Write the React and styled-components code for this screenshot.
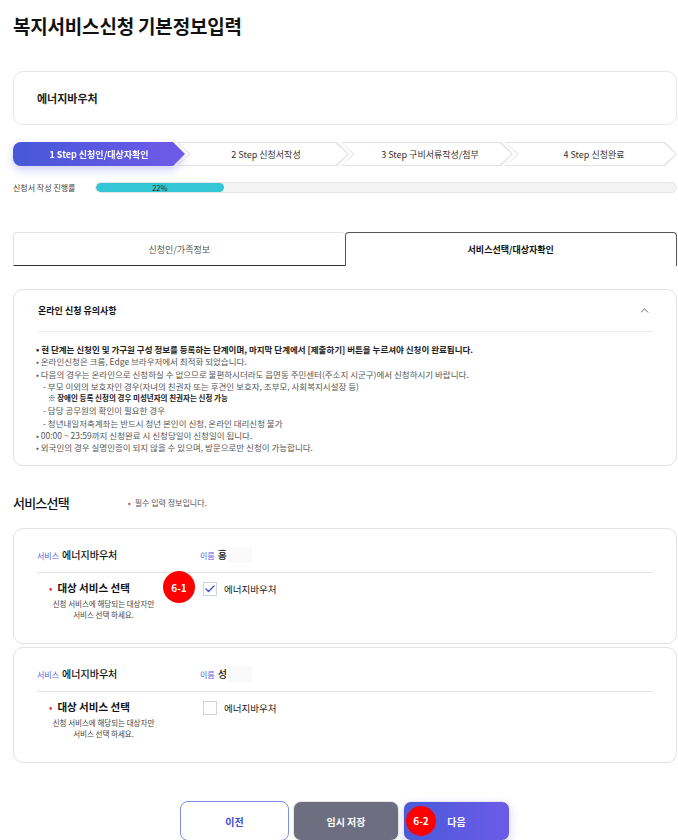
import React from 'react'
import styled, { createGlobalStyle } from 'styled-components'
import { ChevronUp, Check } from 'lucide-react'

const GlobalStyle = createGlobalStyle`
  body {
    margin: 0;
    background: #fff;
    font-family: "Noto Sans CJK KR", "Noto Sans", sans-serif;
    color: #222;
  }
  * { box-sizing: border-box; }
`;

const Page = styled.div`
  width: 678px;
  padding: 14px 1px 0 13px;
`;

const Title = styled.h1`
  margin: 0;
  font-size: 19px;
  line-height: 24px;
  font-weight: 700;
  color: #111;
  letter-spacing: -0.2px;
`;

const NameCard = styled.div`
  margin-top: 33px;
  height: 54px;
  border: 1px solid #e6e6e6;
  border-radius: 10px;
  display: flex;
  align-items: center;
  padding-left: 23px;
  font-size: 11px;
  font-weight: 700;
  color: #1a1a1a;
`;

const Steps = styled.div`
  margin-top: 17px;
  display: flex;
`;

const arrowFirst = 'polygon(0 0, calc(100% - 12px) 0, 100% 50%, calc(100% - 12px) 100%, 0 100%)';
const arrowMid = 'polygon(0 0, calc(100% - 12px) 0, 100% 50%, calc(100% - 12px) 100%, 0 100%, 12px 50%)';

const StepWrap = styled.div`
  flex: 1;
  position: relative;
  z-index: ${p => (p.$active ? 2 : 1)};
  margin-left: ${p => (p.$first ? 0 : -8)}px;
  filter: ${p => (p.$active ? 'drop-shadow(0 4px 5px rgba(95, 85, 225, 0.28))' : 'none')};
`;

const StepShape = styled.div`
  position: relative;
  height: 24px;
  display: flex;
  align-items: center;
  justify-content: center;
  font-size: 9px;
  font-weight: ${p => (p.$active ? 700 : 400)};
  color: ${p => (p.$active ? '#fff' : '#333')};
  background: ${p => (p.$active ? 'linear-gradient(90deg, #4658d8, #6f5ae8)' : '#e3e3e3')};
  border-radius: ${p => (p.$first ? '8px 0 0 8px' : '0')};
  clip-path: ${p => (p.$first ? arrowFirst : arrowMid)};
  padding-left: ${p => (p.$first ? 0 : 6)}px;

  &::before {
    content: '';
    display: ${p => (p.$active ? 'none' : 'block')};
    position: absolute;
    inset: 1px 1.5px;
    background: #fff;
    clip-path: ${p => (p.$first ? arrowFirst : arrowMid)};
  }
`;

const StepText = styled.span`
  position: relative;
`;

const ProgressRow = styled.div`
  margin-top: 16px;
  display: flex;
  align-items: center;
  height: 11px;
`;

const ProgressLabel = styled.span`
  width: 82px;
  font-size: 8px;
  color: #444;
  white-space: nowrap;
`;

const ProgressTrack = styled.div`
  flex: 1;
  height: 11px;
  border-radius: 6px;
  background: #f3f3f3;
  border: 1px solid #e6e6e6;
  overflow: hidden;
`;

const ProgressFill = styled.div`
  height: 100%;
  border-radius: 6px;
  background: #35c6d6;
  display: flex;
  align-items: center;
  justify-content: center;
  font-size: 7.5px;
  color: #222;
`;

const Tabs = styled.div`
  margin-top: 39px;
  display: flex;
  height: 34px;
`;

const Tab = styled.div`
  flex: 1;
  display: flex;
  align-items: center;
  justify-content: center;
  font-size: 9px;
  font-weight: ${p => (p.$active ? 700 : 400)};
  color: ${p => (p.$active ? '#111' : '#555')};
  border: 1px solid ${p => (p.$active ? '#555' : '#e2e2e2')};
  border-bottom: ${p => (p.$active ? 'none' : '1px solid #333')};
  border-right: ${p => (p.$active ? '1px solid #555' : 'none')};
  border-radius: 4px 4px 0 0;
`;

const NoticeBox = styled.section`
  margin-top: 23px;
  border: 1px solid #e2e2e2;
  border-radius: 10px;
  padding: 0 23px 12px 24px;
`;

const NoticeHead = styled.div`
  height: 42px;
  display: flex;
  align-items: center;
  justify-content: space-between;
  border-bottom: 1px solid #ececec;
  font-size: 9px;
  font-weight: 700;
  color: #111;
`;

const NoticeList = styled.ul`
  list-style: none;
  margin: 11px 0 0 -2px;
  padding: 0;
`;

const NoticeItem = styled.li`
  font-size: ${p => (p.$note ? 7.5 : 8.5)}px;
  line-height: 12.25px;
  white-space: nowrap;
  font-weight: ${p => (p.$strong ? 700 : 400)};
  color: ${p => (p.$strong ? '#222' : '#555')};
  padding-left: ${p => p.$indent || 0}px;
`;

const SectionHead = styled.div`
  margin-top: 26px;
  display: flex;
  align-items: center;
  height: 20px;
`;

const SectionTitle = styled.h2`
  margin: 0;
  width: 115px;
  font-size: 13px;
  font-weight: 500;
  letter-spacing: -0.8px;
  color: #111;
`;

const Required = styled.span`
  font-size: 8px;
  color: #555;
  &::before {
    content: '•';
    color: #e53935;
    margin-right: 4px;
  }
`;

const ServiceCard = styled.div`
  margin-top: ${p => p.$gap}px;
  border: 1px solid #e2e2e2;
  border-radius: 10px;
  padding: 0 23px 23px 23px;
`;

const CardHeader = styled.div`
  display: flex;
  align-items: baseline;
  padding: 18px 0 8px;
  line-height: 16px;
  border-bottom: 1px solid #e3e3e3;
`;

const HeadCell = styled.div`
  width: ${p => p.$w || 'auto'};
  display: flex;
  align-items: baseline;
  gap: 3px;
`;

const Key = styled.span`
  font-size: 8px;
  color: #5960e0;
`;

const Value = styled.span`
  font-size: 10px;
  font-weight: 500;
  color: #111;
`;

const NameValue = styled(Value)`
  display: inline-block;
  min-width: 34px;
  background: linear-gradient(90deg, #fff 0, #fff 10px, #fafafa 10px);
`;

const SelectRow = styled.div`
  position: relative;
  display: flex;
  padding-top: 8px;
`;

const SelectLabel = styled.div`
  width: 163px;
`;

const LabelTitle = styled.div`
  width: 133px;
  padding-left: 12px;
  font-size: 10.5px;
  font-weight: 700;
  line-height: 14px;
  color: #111;
  &::before {
    content: '•';
    color: #e53935;
    margin-right: 5px;
    font-size: 9px;
  }
`;

const LabelDesc = styled.p`
  width: 133px;
  margin: 2px 0 0;
  text-align: center;
  font-size: 7.5px;
  line-height: 11px;
  color: #444;
`;

const CheckLine = styled.label`
  display: flex;
  align-items: center;
  gap: 7px;
  height: 14px;
  padding-left: 3px;
  margin-top: 1px;
  font-size: 9.5px;
  color: #222;
`;

const Box = styled.span`
  width: 14px;
  height: 14px;
  border: 1px solid #cfd2df;
  background: #fff;
  display: flex;
  align-items: center;
  justify-content: center;
`;

const Marker = styled.span`
  position: absolute;
  width: ${p => p.$size}px;
  height: ${p => p.$size}px;
  border-radius: 50%;
  background: #ff0000;
  color: #fff;
  font-size: 10px;
  font-weight: 700;
  display: flex;
  align-items: center;
  justify-content: center;
  left: ${p => p.$left}px;
  top: ${p => p.$top}px;
`;

const Actions = styled.div`
  margin-top: 38px;
  display: flex;
  justify-content: center;
  gap: 4px;
`;

const Button = styled.button`
  position: relative;
  width: ${p => p.$w}px;
  height: 40px;
  border-radius: 8px;
  font-family: inherit;
  font-size: 10px;
  font-weight: 700;
  cursor: pointer;
  border: 1.5px solid transparent;
  ${p => p.$kind === 'outline' && `
    background: #fff;
    border-color: #7d8de8;
    color: #3a4bd0;
  `}
  ${p => p.$kind === 'grey' && `
    background: #6d6f80;
    border-color: #e6e6ea;
    color: #fff;
  `}
  ${p => p.$kind === 'primary' && `
    background: linear-gradient(90deg, #4a5ad9, #6c5be8);
    border-color: #e8e6fb;
    color: #fff;
    box-shadow: 0 4px 10px rgba(100, 90, 230, 0.25);
  `}
`;

const steps = ['1 Step 신청인/대상자확인', '2 Step 신청서작성', '3 Step 구비서류작성/첨부', '4 Step 신청완료'];

const notices = [
  { text: '• 현 단계는 신청인 및 가구원 구성 정보를 등록하는 단계이며, 마지막 단계에서 [제출하기] 버튼을 누르셔야 신청이 완료됩니다.', strong: true },
  { text: '• 온라인신청은 크롬, Edge 브라우저에서 최적화 되었습니다.' },
  { text: '• 다음의 경우는 온라인으로 신청하실 수 없으므로 불편하시더라도 읍면동 주민센터(주소지 시군구)에서 신청하시기 바랍니다.' },
  { text: '- 부모 이외의 보호자인 경우(자녀의 친권자 또는 후견인 보호자, 조부모, 사회복지시설장 등)', indent: 7 },
  { text: '※ 장애인 등록 신청의 경우 미성년자의 친권자는 신청 가능', indent: 12, strong: true, note: true },
  { text: '- 담당 공무원의 확인이 필요한 경우', indent: 7 },
  { text: '- 청년내일저축계좌는 반드시 청년 본인이 신청, 온라인 대리신청 불가', indent: 7 },
  { text: '• 00:00 ~ 23:59까지 신청완료 시 신청당일이 신청일이 됩니다.' },
  { text: '• 외국인의 경우 실명인증이 되지 않을 수 있으며, 방문으로만 신청이 가능합니다.' },
];

const services = [
  { name: '홍', checked: true, marker: '6-1', gap: 16 },
  { name: '성', checked: false, gap: 3 },
];

function ServiceBlock({ name, checked, marker, gap }) {
  return (
    <ServiceCard $gap={gap}>
      <CardHeader>
        <HeadCell $w="163px">
          <Key>서비스</Key>
          <Value>에너지바우처</Value>
        </HeadCell>
        <HeadCell>
          <Key>이름</Key>
          <NameValue>{name}</NameValue>
        </HeadCell>
      </CardHeader>
      <SelectRow>
        <SelectLabel>
          <LabelTitle>대상 서비스 선택</LabelTitle>
          <LabelDesc>
            신청 서비스에 해당되는 대상자만
            <br />
            서비스 선택 하세요.
          </LabelDesc>
        </SelectLabel>
        <CheckLine>
          <Box>{checked && <Check size={12} strokeWidth={2.6} color="#3551d1" />}</Box>
          에너지바우처
        </CheckLine>
        {marker && (
          <Marker $size={32} $left={126} $top={-2}>
            {marker}
          </Marker>
        )}
      </SelectRow>
    </ServiceCard>
  );
}

export default function App() {
  const progress = 22;
  return (
    <Page>
      <GlobalStyle />
      <Title>복지서비스신청 기본정보입력</Title>
      <NameCard>에너지바우처</NameCard>

      <Steps>
        {steps.map((s, i) => (
          <StepWrap key={s} $first={i === 0} $active={i === 0}>
            <StepShape $first={i === 0} $active={i === 0}>
              <StepText>{s}</StepText>
            </StepShape>
          </StepWrap>
        ))}
      </Steps>

      <ProgressRow>
        <ProgressLabel>신청서 작성 진행률</ProgressLabel>
        <ProgressTrack>
          <ProgressFill style={{ width: `${progress}%` }}>{progress}%</ProgressFill>
        </ProgressTrack>
      </ProgressRow>

      <Tabs>
        <Tab>신청인/가족정보</Tab>
        <Tab $active>서비스선택/대상자확인</Tab>
      </Tabs>

      <NoticeBox>
        <NoticeHead>
          온라인 신청 유의사항
          <ChevronUp size={13} strokeWidth={1.5} color="#444" style={{ marginRight: 2 }} />
        </NoticeHead>
        <NoticeList>
          {notices.map((n, i) => (
            <NoticeItem key={i} $strong={n.strong} $indent={n.indent} $note={n.note}>
              {n.text}
            </NoticeItem>
          ))}
        </NoticeList>
      </NoticeBox>

      <SectionHead>
        <SectionTitle>서비스선택</SectionTitle>
        <Required>필수 입력 정보입니다.</Required>
      </SectionHead>

      {services.map((s, i) => (
        <ServiceBlock key={i} {...s} />
      ))}

      <Actions>
        <Button $kind="outline" $w={109}>이전</Button>
        <Button $kind="grey" $w={106}>임시 저장</Button>
        <Button $kind="primary" $w={107}>
          <Marker $size={30} $left={2} $top={3.5}>6-2</Marker>
          다음
        </Button>
      </Actions>
    </Page>
  );
}
